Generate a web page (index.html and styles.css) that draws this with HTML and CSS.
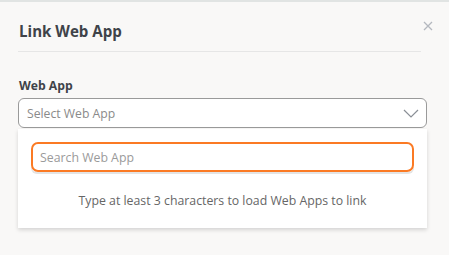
FILE: index.html
```html
<!doctype html>
<html>
    <head>
        <meta charset="utf-8">
        <title>Link Web App</title>
        <link rel="stylesheet" href="styles.css">
    </head>
    <body>
    <div class="modal">
        <div class="modal-head">
            <h2>Link Web App</h2>
            <span class="close">
                <svg width="10" height="10" viewBox="0 0 10 10"><path d="M1 1L9 9M9 1L1 9" stroke="#b4b8bf" stroke-width="1.3" fill="none"/></svg>
            </span>
        </div>

        <div class="field">
            <label class="field-label">Web App</label>
            <div class="select">
                <span>Select Web App</span>
                <svg width="16" height="9" viewBox="0 0 16 9"><path d="M1 1L8 8L15 1" stroke="#8a8f96" stroke-width="1.2" fill="none"/></svg>
            </div>
            <div class="dropdown">
                <div class="search">
                    <input type="text" placeholder="Search Web App" autofocus>
                </div>
                <p class="hint">Type at least 3 characters to load Web Apps to link</p>
            </div>
        </div>
    </div>
    </body>
</html>
```

FILE: styles.css
```css
html, body { margin:0; padding:0; }
body { background:#f9f8f7; font-family:"Open Sans", "Liberation Sans", sans-serif; color:#444; border-top:2px solid #e1e4e3; height:253px; overflow:hidden; }

.modal { padding:0 22px 0 18px; }
.modal-head { display:flex; justify-content:space-between; align-items:flex-start; border-bottom:1px solid #e6e6e6; margin-right:6px; height:49px; }
.modal-head h2 { margin:0; padding-top:18px; padding-left:1px; font-size:15.1px; font-weight:700; color:#3f4349; line-height:22px; }
.close { margin-top:19px; margin-right:-12px; }
.close svg { display:block; }

.field { padding-top:25px; }
.field-label { display:block; font-size:12.2px; font-weight:700; color:#3f4349; line-height:18px; padding-left:1px; margin-bottom:3px; }

.select { display:flex; justify-content:space-between; align-items:center; height:28px; border:1px solid #9a9a9a; border-radius:6px; background:#fff; padding:0 7px 0 8px; font-size:12.2px; color:#8a8a8a; }

.dropdown { background:#fff; margin-top:1px; padding:13px 13px 0; height:86px; box-shadow:0 2px 4px rgba(0,0,0,.15); }
.search { box-shadow:0 2px 0 #e4e4e4; border-radius:6px; }
.search input { display:block; width:100%; box-sizing:border-box; height:30px; border:2px solid #fb7a24; border-radius:7px; outline:none; padding:0 7px; font-family:inherit; font-size:12.3px; color:#444; }
.search input::placeholder { color:#9a9a9a; }
.hint { margin:20px 0 0; text-align:center; font-size:12.3px; color:#666; line-height:18px; }
```
